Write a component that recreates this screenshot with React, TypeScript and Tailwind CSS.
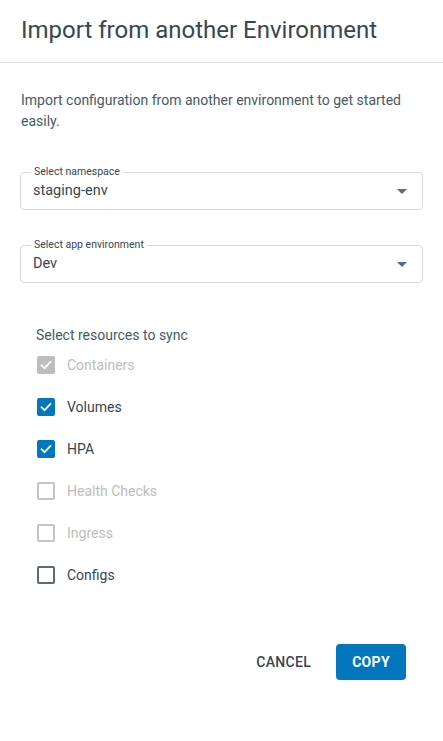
import React from 'react';

type Resource = {
  label: string;
  checked: boolean;
  disabled: boolean;
};

const resources: Resource[] = [
  { label: 'Containers', checked: true, disabled: true },
  { label: 'Volumes', checked: true, disabled: false },
  { label: 'HPA', checked: true, disabled: false },
  { label: 'Health Checks', checked: false, disabled: true },
  { label: 'Ingress', checked: false, disabled: true },
  { label: 'Configs', checked: false, disabled: false },
];

const CheckMark = () => (
  <svg width="14" height="14" viewBox="0 0 24 24" fill="none">
    <path d="M4.5 12.5l5 5L19.5 7" stroke="white" strokeWidth="3" strokeLinecap="square" />
  </svg>
);

const Checkbox: React.FC<{ checked: boolean; disabled: boolean }> = ({ checked, disabled }) => {
  if (checked) {
    return (
      <span
        className={`flex h-[18px] w-[18px] items-center justify-center rounded-[2px] ${
          disabled ? 'bg-[#bdbdbd]' : 'bg-[#0277bd]'
        }`}
      >
        <CheckMark />
      </span>
    );
  }
  return (
    <span
      className={`h-[18px] w-[18px] rounded-[2px] border-2 ${
        disabled ? 'border-[#c4c4c4]' : 'border-[#546e7a]'
      }`}
    />
  );
};

const SelectField: React.FC<{ label: string; value: string }> = ({ label, value }) => (
  <div className="relative h-[38px] rounded-[4px] border border-[#d9d9d9]">
    <span className="absolute -top-[8px] left-[10px] bg-white px-[3px] text-[10.5px] leading-[14px] text-[#37474f]">
      {label}
    </span>
    <div className="flex h-full items-center justify-between pl-[12px] pr-[15px]">
      <span className="text-[14.5px] text-[#37474f]">{value}</span>
      <svg width="10" height="5" viewBox="0 0 10 5">
        <path d="M0 0h10L5 5z" fill="#546e7a" />
      </svg>
    </div>
  </div>
);

export default function App() {
  return (
    <div className="min-h-[741px] w-[443px] bg-white font-['Roboto',sans-serif]">
      <div className="flex h-[63px] items-center border-b border-[#e3e3e3] px-[21px]">
        <h1 className="pb-[2px] text-[24px] font-normal text-[#37474f]">Import from another Environment</h1>
      </div>

      <div className="px-[20px] pt-[27px]">
        <p className="pl-[1px] text-[14px] leading-[21px] text-[#455a64]">
          Import configuration from another environment to get started easily.
        </p>

        <div className="mt-[40px]">
          <SelectField label="Select namespace" value="staging-env" />
        </div>
        <div className="mt-[35px]">
          <SelectField label="Select app environment" value="Dev" />
        </div>

        <div className="mt-[43px] pl-[16px]">
          <div className="text-[14px] leading-[19px] text-[#455a64]">Select resources to sync</div>
          <div className="-mt-[1px]">
            {resources.map((r) => (
              <div key={r.label} className="flex h-[42px] items-center pl-[1px]">
                <Checkbox checked={r.checked} disabled={r.disabled} />
                <span
                  className={`ml-[12px] text-[14px] ${r.disabled ? 'text-[#bdbdbd]' : 'text-[#37474f]'}`}
                >
                  {r.label}
                </span>
              </div>
            ))}
          </div>
        </div>

        <div className="mt-[48px] flex items-center justify-end gap-[17px] pr-[17px]">
          <button className="h-[36px] px-[8px] text-[14px] font-medium tracking-[0.3px] text-[#37474f]">
            CANCEL
          </button>
          <button className="h-[36px] w-[70px] rounded-[4px] bg-[#0277bd] text-[14px] font-bold tracking-[0.3px] text-white">
            COPY
          </button>
        </div>
      </div>
    </div>
  );
}
